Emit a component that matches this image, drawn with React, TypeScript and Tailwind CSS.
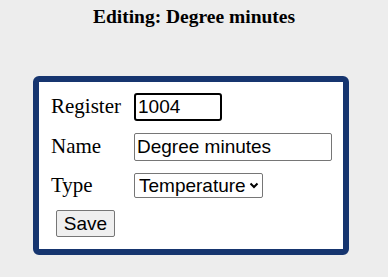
import React, { useState } from 'react'

export default function App() {
  const [register, setRegister] = useState('1004')
  const [name, setName] = useState('Degree minutes')
  const [type, setType] = useState('Temperature')

  return (
    <div className="min-h-[277px] bg-[#ededed] pt-[6px] font-['Liberation_Serif',serif] text-black">
      <h2 className="text-center text-[19.5px] font-bold leading-[22px]">Editing: {name}</h2>

      <div className="ml-[33px] mt-[48px] w-[316px] rounded-[6px] border-[6px] border-[#16356f] bg-white pt-[11px] pb-[12px] pl-[12px]">
        <div className="flex flex-col gap-[12px]">
          {/* Register */}
          <div className="flex h-[28px] items-center">
            <label className="w-[83px] text-[21px]">Register</label>
            <input
              value={register}
              onChange={e => setRegister(e.target.value)}
              className="h-[28px] w-[88px] rounded-[3px] border-2 border-black px-[2px] font-['Liberation_Sans',sans-serif] text-[19px] outline-none"
            />
          </div>

          {/* Name */}
          <div className="flex h-[28px] items-center">
            <label className="w-[83px] text-[21px]">Name</label>
            <input
              value={name}
              onChange={e => setName(e.target.value)}
              className="h-[28px] w-[198px] rounded-[2px] border border-[#767676] px-[2px] font-['Liberation_Sans',sans-serif] text-[19px] outline-none"
            />
          </div>

          {/* Type */}
          <div className="flex h-[25px] items-center">
            <label className="w-[83px] text-[21px]">Type</label>
            <div className="relative">
              <select
                value={type}
                onChange={e => setType(e.target.value)}
                className="h-[25px] w-[129px] appearance-none rounded-[2px] border border-[#767676] bg-white pl-[4px] font-['Liberation_Sans',sans-serif] text-[19px] leading-[23px] outline-none"
              >
                <option>Temperature</option>
                <option>Pressure</option>
                <option>Percent</option>
              </select>
              <svg
                className="pointer-events-none absolute right-[4px] top-[9px]"
                width="10"
                height="7"
                viewBox="0 0 10 7"
                fill="none"
              >
                <path d="M1.5 1.5 L5 5 L8.5 1.5" stroke="#000" strokeWidth="2" />
              </svg>
            </div>
          </div>

          {/* Save */}
          <div className="pl-[5px]">
            <button className="h-[27px] w-[59px] rounded-[2px] border border-[#767676] bg-[#efefef] font-['Liberation_Sans',sans-serif] text-[19px] leading-[25px]">
              Save
            </button>
          </div>
        </div>
      </div>
    </div>
  )
}
